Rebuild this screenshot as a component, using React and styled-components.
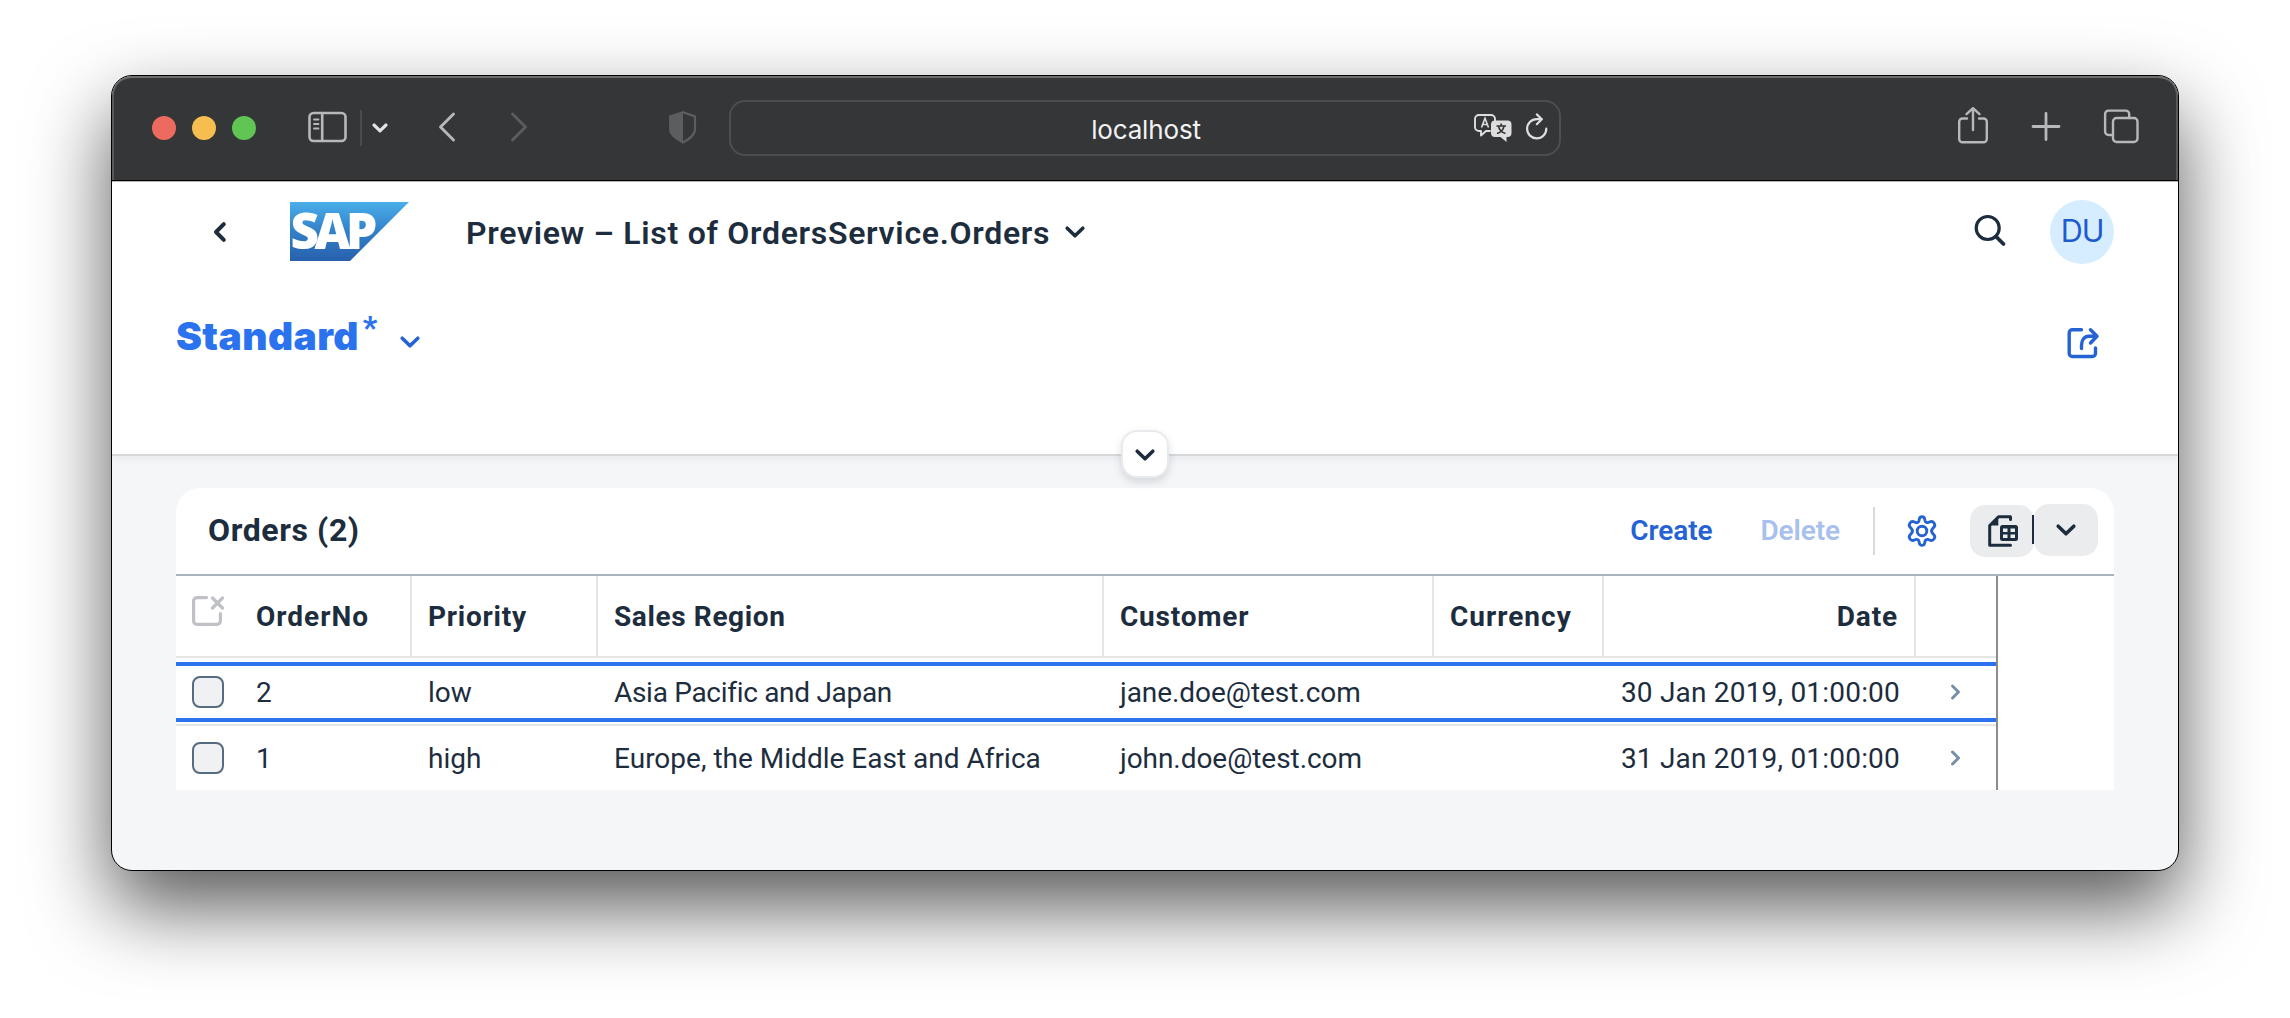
import React from 'react';
import styled, { createGlobalStyle } from 'styled-components';

const ink = '#1d2d3e';
const blue = '#2b72ee';
const link = '#2563d4';
const font = `Roboto, 'Noto Sans', sans-serif`;

const GlobalStyle = createGlobalStyle`
  *, *::before, *::after { box-sizing: border-box; }
  body { margin: 0; background: #fff; overflow: hidden; }
  svg { display: block; flex: none; overflow: visible; }
`;

const Desktop = styled.div`
  height: 1018px;
  padding: 75px 111px 0;
  overflow: hidden;
  font-family: ${font};
  color: ${ink};
`;

const Window = styled.div`
  width: 2068px;
  height: 796px;
  display: flex;
  flex-direction: column;
  border: 1px solid #000;
  border-radius: 21px;
  overflow: hidden;
  background: #f5f6f8;
  box-shadow: 0 36px 80px rgba(0, 0, 0, 0.66);
`;

const BrowserBar = styled.div`
  flex: none;
  height: 106px;
  padding: 0 38px 2px 40px;
  display: flex;
  align-items: center;
  background: #353638;
  border-radius: 20px 20px 0 0;
  box-shadow: inset 0 -1px #b5b5b5, inset 0 -2px #000, inset 0 2px #6c6d6e,
    inset 2px 0 #58595b, inset -2px 0 #58595b;
`;

const Lights = styled.div`
  display: flex;
  gap: 16px;
`;

const Light = styled.span`
  width: 24px;
  height: 24px;
  border-radius: 50%;
  background: ${(p) => p.$color};
`;

const Slot = styled.div`
  flex: none;
  margin-left: ${(p) => p.$gap}px;
`;

const BarDivider = styled.div`
  width: 2px;
  height: 36px;
  margin-left: 12px;
  background: #4a4b4d;
`;

const AddressBar = styled.div`
  width: 832px;
  height: 56px;
  margin-left: 31px;
  padding-right: 11px;
  display: grid;
  grid-template-columns: 1fr auto 1fr;
  align-items: center;
  border: 2px solid #4d4e50;
  border-radius: 16px;
`;

const Host = styled.span`
  grid-column: 2;
  padding: 3px 0 0 13px;
  font: 400 26px/32px Inter, sans-serif;
  letter-spacing: -0.15px;
  color: #f2f2f2;
`;

const AddressTools = styled.div`
  justify-self: end;
  display: flex;
  align-items: center;
  gap: 14px;
`;

const BarActions = styled.div`
  margin-left: auto;
  display: flex;
  gap: 42px;
`;

const Page = styled.div`
  flex: none;
  height: 274px;
  display: flex;
  flex-direction: column;
  background: #fff;
  border-bottom: 2px solid #d6d8da;
  box-shadow: 0 4px 6px rgba(34, 53, 72, 0.05);
  position: relative;
`;

const Shell = styled.header`
  height: 100px;
  padding: 0 64px 0 100px;
  display: flex;
  align-items: center;
`;

const LogoLink = styled.a`
  margin: 0 0 2px 62px;
`;

const Title = styled.h1`
  margin: 0 15px 0 57px;
  font: 600 32px/40px ${font};
  letter-spacing: 0.71px;
  white-space: nowrap;
  padding-top: 2px;
`;

const ShellActions = styled.div`
  margin-left: auto;
  display: flex;
  align-items: center;
  gap: 44px;
`;

const Avatar = styled.div`
  width: 64px;
  height: 64px;
  padding-bottom: 2px;
  border-radius: 50%;
  display: flex;
  align-items: center;
  justify-content: center;
  background: #d6edff;
  color: #1f5bd0;
  font: 400 30.5px/60px Inter, sans-serif;
  letter-spacing: -1px;
`;

const VariantRow = styled.div`
  padding: 28px 78px 0 64px;
  display: flex;
  align-items: flex-start;
  justify-content: space-between;
`;

const Variant = styled.div`
  display: flex;
  align-items: flex-start;
  color: ${blue};
`;

const VariantName = styled.span`
  font: 900 39px/52px Inter, sans-serif;
  letter-spacing: 0.4px;
`;

const Dirty = styled.span`
  margin: -2px 23px 0 4px;
  font: 900 31px/40px ${font};
`;

const VariantChevron = styled.span`
  margin-top: 26px;
`;

const ShareLink = styled.a`
  margin-top: 16px;
`;

const ExpandButton = styled.button`
  position: absolute;
  left: 50%;
  bottom: -24px;
  width: 48px;
  height: 48px;
  margin-left: -24px;
  padding: 2px 0 0;
  display: flex;
  align-items: center;
  justify-content: center;
  border: 2px solid #e9eaee;
  border-radius: 16px;
  background: #fff;
  box-shadow: 0 4px 8px rgba(34, 53, 72, 0.16);
`;

const Card = styled.section`
  margin: 32px 64px 0;
  height: 302px;
  flex: none;
  border-radius: 24px 24px 0 0;
  background: #fff;
`;

const Toolbar = styled.div`
  height: 88px;
  padding: 0 16px 2px 32px;
  display: flex;
  align-items: center;
  border-bottom: 2px solid #a8b3bd;
`;

const TableTitle = styled.h2`
  margin: 0 auto 0 0;
  font: 700 32px/40px ${font};
  letter-spacing: 0.6px;
`;

const TextButton = styled.button`
  padding: 2px 0 0;
  margin-right: ${(p) => p.$after}px;
  border: 0;
  background: none;
  font: 600 28px/36px ${font};
  letter-spacing: -0.1px;
  color: ${link};
  opacity: ${(p) => (p.disabled ? 0.4 : 1)};
`;

const ToolDivider = styled.div`
  width: 2px;
  height: 48px;
  margin: 2px 32px 0 0;
  background: #d9d9d9;
`;

const ExportGroup = styled.div`
  display: flex;
  margin-left: 33px;
`;

const ExportButton = styled.button`
  width: 64px;
  height: 52px;
  padding: 0;
  margin-top: ${(p) => p.$drop || 0}px;
  display: flex;
  align-items: center;
  justify-content: center;
  border: 0;
  border-radius: 15px;
  background: #ebecee;
`;

const ExportSeparator = styled.span`
  width: 2px;
  height: 29px;
  margin: 11px 0 0 -2px;
  background: ${ink};
  z-index: 1;
`;

const Table = styled.div`
  width: 1822px;
  border-right: 2px solid #8c8c8c;
`;

const columns = '64px 172px 186px 506px 330px 170px 312px 80px';

const HeadRow = styled.div`
  display: grid;
  grid-template-columns: ${columns};
  height: 82px;
  border-bottom: 2px solid #e5e5e5;
`;

const HeadCell = styled.div`
  padding: 2px ${(p) => (p.$end ? 16 : 8)}px 0 16px;
  display: flex;
  align-items: center;
  justify-content: ${(p) => (p.$end ? 'flex-end' : 'flex-start')};
  border-right: ${(p) => (p.$plain ? 'none' : '2px solid #e5e5e5')};
  font: 700 28px/36px ${font};
  letter-spacing: ${(p) => p.$track || 0.85}px;
  white-space: nowrap;
`;

const SelectCell = styled.div`
  padding: 0 0 ${(p) => p.$raise || 0}px 16px;
  display: flex;
  align-items: center;
`;

const RowFrame = styled.div`
  height: ${(p) => (p.$active ? 68 : 64)}px;
  padding: ${(p) => (p.$active ? '4px 0 2px' : 0)};
  border-bottom: ${(p) => (p.$active ? '2px solid #e5e5e5' : 'none')};
`;

const Row = styled.div`
  height: 100%;
  display: grid;
  grid-template-columns: ${columns};
  border: 0 solid ${blue};
  border-width: ${(p) => (p.$active ? '4px 0' : 0)};
`;

const Cell = styled.div`
  padding: 2px 16px 0;
  display: flex;
  align-items: center;
  justify-content: ${(p) => (p.$end ? 'flex-end' : 'flex-start')};
  font: 400 28px/36px ${font};
  letter-spacing: ${(p) => p.$track || 0}px;
  white-space: nowrap;
`;

const NavCell = styled.div`
  padding-left: 34px;
  display: flex;
  align-items: center;
`;

const Checkbox = styled.span`
  width: 32px;
  height: 32px;
  border: 2px solid #556b82;
  border-radius: 8px;
  background: #eff1f2;
`;

const Line = ({ w, h, color = ink, stroke = 3, children, ...rest }) => (
  <svg
    width={w}
    height={h}
    viewBox={`0 0 ${w} ${h}`}
    fill="none"
    stroke={color}
    strokeWidth={stroke}
    strokeLinecap="round"
    strokeLinejoin="round"
    {...rest}
  >
    {children}
  </svg>
);

const ChevronDown = ({ color = ink }) => (
  <Line w={20} h={12} color={color} stroke={3.6}>
    <path d="M2.2 2.2 10 9.8 17.8 2.2" />
  </Line>
);

const SapLogo = () => (
  <svg width="119" height="59" viewBox="0 0 119 59">
    <defs>
      <linearGradient id="sap" x1="0" y1="0" x2="0" y2="1">
        <stop offset="0" stopColor="#4aaeea" />
        <stop offset="0.5" stopColor="#3280c8" />
        <stop offset="1" stopColor="#2860ad" />
      </linearGradient>
    </defs>
    <path d="M0 0H119L60 59H0Z" fill="url(#sap)" />
    <text
      x="0.5"
      y="47"
      fontFamily="Open Sans, sans-serif"
      fontWeight="800"
      fontSize="49.5"
      fill="#fff"
      letterSpacing="-4.5"
    >
      SAP
    </text>
  </svg>
);

const SidebarIcon = () => (
  <Line w={40} h={40} color="#b7b8ba" stroke={2.6}>
    <rect x="1.5" y="5" width="36" height="28" rx="4" />
    <path d="M14.2 5v28" />
    <path d="M6 11.5h4.5M6 16h4.5M6 20.5h4.5" strokeWidth="1.8" />
  </Line>
);

const ShieldIcon = () => (
  <svg width="30" height="40" viewBox="0 0 30 40">
    <path
      d="M15 4.2 27 8.4V21c0 6-5 9.6-12 13.5C8 30.6 2.2 27 2.2 21V8.4Z"
      fill="none"
      stroke="#5c5d5f"
      strokeWidth="2.2"
      strokeLinejoin="round"
    />
    <path d="M15 4V35C8 31 1.5 27 1.5 21V8.2Z" fill="#5c5d5f" />
  </svg>
);

const TranslateIcon = () => (
  <svg width="38" height="30" viewBox="0 0 38 30">
    <path
      d="M16 18H12L7 22.5V18H5a4 4 0 0 1-4-4V6a4 4 0 0 1 4-4H17a4 4 0 0 1 4 4V8"
      fill="none"
      stroke="#dededf"
      strokeWidth="1.9"
      strokeLinejoin="round"
      strokeLinecap="round"
    />
    <path d="M21 7.5H33.5a4 4 0 0 1 4 4V20a4 4 0 0 1-4 4H32.5V29L26.500 24H21a4 4 0 0 1-4-4V11.5a4 4 0 0 1 4-4Z" fill="#dededf" />
    <path d="M7.5 14.5 11 5.2 14.5 14.5M8.7 11.5H13.3" fill="none" stroke="#dededf" strokeWidth="1.6" />
    <path
      d="M22.5 13H32M27.2 10.5V13M24.5 13C25 16.5 28 19.5 31.5 20.5M30 13C29.5 16.5 26.5 19.5 23 20.5"
      fill="none"
      stroke="#353638"
      strokeWidth="1.7"
    />
  </svg>
);

const ReloadIcon = () => (
  <Line w={22} h={30} color="#dededf" stroke={2.2}>
    <path d="M20.3 15.7A9.6 9.6 0 1 1 10.7 6.2H15.5" />
    <path d="M10.8 1.4 15.8 6.2 10.8 11.2" />
  </Line>
);

const ShareIcon = () => (
  <Line w={32} h={40} color="#b7b8ba" stroke={2.4}>
    <path d="M10 10.5H5.5a3.3 3.3 0 0 0-3.3 3.3V31a3.3 3.3 0 0 0 3.3 3.3H26.5a3.3 3.3 0 0 0 3.3-3.3V13.8a3.3 3.3 0 0 0-3.3-3.3H22" />
    <path d="M16 22V1M9.5 6.2 16 0.2 22.5 6.2" />
  </Line>
);

const PlusIcon = () => (
  <Line w={30} h={40} color="#b7b8ba" stroke={2.8}>
    <path d="M2 18.5H28M15 5.5V31.5" />
  </Line>
);

const TabsIcon = () => (
  <Line w={37} h={40} color="#b7b8ba" stroke={2.4}>
    <rect x="10" y="10" width="24.5" height="24" rx="3.6" />
    <path d="M10 27H5.5a3.4 3.4 0 0 1-3.4-3.4V6a3.4 3.4 0 0 1 3.4-3.4H22.8a3.4 3.4 0 0 1 3.4 3.4V10" />
  </Line>
);

const SearchIcon = () => (
  <Line w={32} h={36} stroke={3.2}>
    <circle cx="13.7" cy="14" r="11.5" />
    <path d="M22 22.5 29.5 30" strokeWidth="3.8" />
  </Line>
);

const OpenShareIcon = () => (
  <Line w={34} h={34} color={link} stroke={3.4}>
    <path d="M15.5 3.7H6.2a3 3 0 0 0-3 3V27.5a3 3 0 0 0 3 3H26.5a3 3 0 0 0 3-3V22" />
    <path d="M15.5 22.5V19.5C15.5 14.5 18 10.3 23 10.3H30.5M24.5 3.8 31 10.3 24.5 17" />
  </Line>
);

const DeselectIcon = () => (
  <Line w={34} h={32} color="#bfc1c6" stroke={3.2}>
    <path d="M14.5 1.6H5a3.4 3.4 0 0 0-3.4 3.4V25a3.4 3.4 0 0 0 3.4 3.4H25A3.4 3.4 0 0 0 28.4 25V17.5" />
    <path d="M20.5 2 30.5 12M30.5 2 20.5 12" />
  </Line>
);

const GearIcon = () => (
  <Line w={30} h={30} color={link} stroke={2.9} viewBox="0 0 30 30">
    <circle cx="15" cy="16" r="4.8" />
    <path d="M12.4 3.7C13 1 17 1 17.6 3.7L18 5.6C18.4 7.2 19.6 7.9 21.2 7.5L23.5 6.7C26.5 5.9 29 9.7 27 12L25.7 13.4C24.3 15 24.3 17 25.7 18.6L27 20C29 22.3 26.5 26.1 23.5 25.3L21.2 24.5C19.6 24.1 18.4 24.8 18 26.4L17.6 28.3C17 31 13 31 12.4 28.3L12 26.4C11.6 24.8 10.4 24.1 8.8 24.5L6.5 25.3C3.500 26.1 1 22.3 3 20L4.3 18.6C5.7 17 5.7 15 4.3 13.4L3 12C1 9.7 3.5 5.9 6.5 6.7L8.8 7.5C10.4 7.9 11.6 7.2 12 5.6Z" />
  </Line>
);

const SpreadsheetIcon = () => (
  <Line w={28} h={32} stroke={3}>
    <path d="M22.5 4.5V1.7H10.5L1.7 10.5V30.3H22.5" />
    <path d="M10.3 2.5V10.5H2.5Z" fill={ink} stroke="none" />
    <rect x="12" y="10" width="18" height="16" rx="2.5" fill={ink} stroke="none" />
    <path
      d="M15 13.5h4.5v3.5H15zM22.5 13.5H27v3.5h-4.5zM15 19.5h4.5V23H15zM22.5 19.5H27V23h-4.5z"
      fill="#ebecee"
      stroke="none"
    />
  </Line>
);

const orders = [
  { no: '2', priority: 'low', region: 'Asia Pacific and Japan', track: -0.3, customer: 'jane.doe@test.com', date: '30 Jan 2019, 01:00:00', active: true },
  { no: '1', priority: 'high', region: 'Europe, the Middle East and Africa', track: 0.01, customer: 'john.doe@test.com', date: '31 Jan 2019, 01:00:00' },
];

const headings = [
  { label: 'OrderNo', track: 1 },
  { label: 'Priority', track: 0.75 },
  { label: 'Sales Region', track: 0.62 },
  { label: 'Customer', track: 0.8 },
  { label: 'Currency', track: 1 },
];

export default function App() {
  return (
    <Desktop>
      <GlobalStyle />
      <Window>
        <BrowserBar>
          <Lights>
            <Light $color="#ed6a5f" />
            <Light $color="#f5be4f" />
            <Light $color="#61c554" />
          </Lights>
          <Slot $gap={52}><SidebarIcon /></Slot>
          <BarDivider />
          <Slot $gap={10}>
            <Line w={16} h={12} color="#e4e4e5" stroke={3.2}>
              <path d="M2 3 8 8.8 14 3" />
            </Line>
          </Slot>
          <Slot $gap={50}>
            <Line w={18} h={32} color="#b7b8ba" stroke={2.9}>
              <path d="M15.5 2 2.5 15 15.5 28" />
            </Line>
          </Slot>
          <Slot $gap={54}>
            <Line w={18} h={32} color="#5c5d5f" stroke={2.9}>
              <path d="M2.5 2 15.5 15 2.5 28" />
            </Line>
          </Slot>
          <Slot $gap={140}><ShieldIcon /></Slot>
          <AddressBar>
            <Host>localhost</Host>
            <AddressTools>
              <TranslateIcon />
              <ReloadIcon />
            </AddressTools>
          </AddressBar>
          <BarActions>
            <ShareIcon />
            <PlusIcon />
            <TabsIcon />
          </BarActions>
        </BrowserBar>
        <Page>
          <Shell>
            <Line w={16} h={22} stroke={4}>
              <path d="M11.8 3.2 4 11 11.8 18.8" />
            </Line>
            <LogoLink><SapLogo /></LogoLink>
            <Title>Preview – List of OrdersService.Orders</Title>
            <ChevronDown />
            <ShellActions>
              <SearchIcon />
              <Avatar>DU</Avatar>
            </ShellActions>
          </Shell>
          <VariantRow>
            <Variant>
              <VariantName>Standard</VariantName>
              <Dirty>*</Dirty>
              <VariantChevron><ChevronDown color={link} /></VariantChevron>
            </Variant>
            <ShareLink><OpenShareIcon /></ShareLink>
          </VariantRow>
          <ExpandButton><ChevronDown /></ExpandButton>
        </Page>
        <Card>
          <Toolbar>
            <TableTitle>Orders (2)</TableTitle>
            <TextButton $after={48}>Create</TextButton>
            <TextButton $after={33} disabled>Delete</TextButton>
            <ToolDivider />
            <GearIcon />
            <ExportGroup>
              <ExportButton $drop={1}><SpreadsheetIcon /></ExportButton>
              <ExportSeparator />
              <ExportButton><ChevronDown /></ExportButton>
            </ExportGroup>
          </Toolbar>
          <Table>
            <HeadRow>
              <SelectCell $raise={8}><DeselectIcon /></SelectCell>
              {headings.map((h) => (
                <HeadCell key={h.label} $track={h.track}>{h.label}</HeadCell>
              ))}
              <HeadCell $end>Date</HeadCell>
              <HeadCell $plain />
            </HeadRow>
            {orders.map((o) => (
              <RowFrame key={o.no} $active={o.active}>
                <Row $active={o.active}>
                  <SelectCell><Checkbox /></SelectCell>
                  <Cell>{o.no}</Cell>
                  <Cell>{o.priority}</Cell>
                  <Cell $track={o.track}>{o.region}</Cell>
                  <Cell $track={-0.05}>{o.customer}</Cell>
                  <Cell />
                  <Cell $end $track={0.2}>{o.date}</Cell>
                  <NavCell>
                    <Line w={12} h={18} color="#788fa6" stroke={3}>
                      <path d="M2.5 3 8.5 9 2.5 15" />
                    </Line>
                  </NavCell>
                </Row>
              </RowFrame>
            ))}
          </Table>
        </Card>
      </Window>
    </Desktop>
  );
}
